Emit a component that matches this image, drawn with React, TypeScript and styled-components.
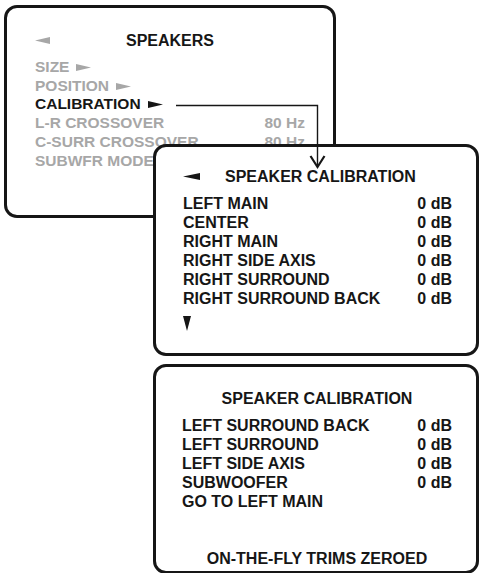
import React from 'react';
import styled, { createGlobalStyle } from 'styled-components';

const GlobalStyle = createGlobalStyle`
  html, body {
    margin: 0;
    padding: 0;
    background: #ffffff;
  }
  body {
    font-family: 'Liberation Sans', Arial, sans-serif;
  }
`;

const INK = '#161616';
const DIM = '#a7a7a7';

type Box = { $x: number; $y: number; $w: number; $h: number; $pad: string };

const Canvas = styled.div`
  position: relative;
  width: 480px;
  height: 573px;
  overflow: hidden;
  background: #ffffff;
`;

const Screen = styled.section<Box>`
  position: absolute;
  left: ${(p) => p.$x}px;
  top: ${(p) => p.$y}px;
  width: ${(p) => p.$w}px;
  height: ${(p) => p.$h}px;
  box-sizing: border-box;
  padding: ${(p) => p.$pad};
  border: 3px solid ${INK};
  border-radius: 13px;
  background: #ffffff;
  display: flex;
  flex-direction: column;
  font-weight: bold;
  color: ${INK};
`;

const TitleBar = styled.div`
  display: grid;
  grid-template-columns: 1fr auto 1fr;
  align-items: center;
  font-size: 16px;
  line-height: 19px;
  margin-bottom: 8px;
`;

const SubTitleBar = styled.div`
  display: flex;
  align-items: center;
  gap: 25px;
  font-size: 16px;
  line-height: 19px;
  margin-bottom: 8px;
`;

const CenterTitle = styled.div`
  text-align: center;
  font-size: 16px;
  line-height: 19px;
  margin-bottom: 8px;
`;

const MenuItem = styled.div<{ $dim?: boolean }>`
  display: flex;
  justify-content: space-between;
  align-items: center;
  font-size: 15.5px;
  line-height: 18.7px;
  color: ${(p) => (p.$dim ? DIM : INK)};
  white-space: nowrap;
`;

const Label = styled.span`
  display: inline-flex;
  align-items: center;
  gap: 7px;
`;

const TrimRow = styled.div`
  display: flex;
  justify-content: space-between;
  font-size: 16px;
  line-height: 19px;
  white-space: nowrap;
`;

const MoreDown = styled.div`
  margin-top: 8px;
  display: flex;
`;

const Footer = styled.div`
  margin-top: auto;
  text-align: center;
  font-size: 16px;
  line-height: 19px;
`;

const Connector = styled.svg`
  position: absolute;
  left: 0;
  top: 0;
  pointer-events: none;
`;

const Tri = ({ dir, color, w, h }: { dir: 'left' | 'right' | 'down'; color: string; w: number; h: number }) => {
  const pts =
    dir === 'left'
      ? `0,${h / 2} ${w},0 ${w},${h}`
      : dir === 'right'
      ? `0,0 ${w},${h / 2} 0,${h}`
      : `0,0 ${w},0 ${w / 2},${h}`;
  return (
    <svg width={w} height={h} viewBox={`0 0 ${w} ${h}`} style={{ display: 'block' }}>
      <polygon points={pts} fill={color} />
    </svg>
  );
};

const speakers = [
  { name: 'SIZE', more: true, dim: true },
  { name: 'POSITION', more: true, dim: true },
  { name: 'CALIBRATION', more: true, dim: false },
  { name: 'L-R CROSSOVER', value: '80 Hz', dim: true },
  { name: 'C-SURR CROSSOVER', value: '80 Hz', dim: true },
  { name: 'SUBWFR MODE', dim: true },
];

const firstPage = ['LEFT MAIN', 'CENTER', 'RIGHT MAIN', 'RIGHT SIDE AXIS', 'RIGHT SURROUND', 'RIGHT SURROUND BACK'];
const secondPage = ['LEFT SURROUND BACK', 'LEFT SURROUND', 'LEFT SIDE AXIS', 'SUBWOOFER'];

export default function App() {
  return (
    <>
      <GlobalStyle />
      <Canvas>
        <Screen $x={4} $y={5} $w={332} $h={213} $pad="23px 28px 0 28px">
          <TitleBar>
            <Tri dir="left" color={DIM} w={15} h={7} />
            <span>SPEAKERS</span>
            <span />
          </TitleBar>
          {speakers.map((s) => (
            <MenuItem key={s.name} $dim={s.dim}>
              <Label>
                {s.name}
                {s.more && <Tri dir="right" color={s.dim ? DIM : INK} w={15} h={7} />}
              </Label>
              {s.value && <span>{s.value}</span>}
            </MenuItem>
          ))}
        </Screen>

        <Screen $x={153} $y={144} $w={326} $h={212} $pad="20px 24px 0 27px">
          <SubTitleBar>
            <Tri dir="left" color={INK} w={17} h={7} />
            <span>SPEAKER CALIBRATION</span>
          </SubTitleBar>
          {firstPage.map((n) => (
            <TrimRow key={n}>
              <span>{n}</span>
              <span>0 dB</span>
            </TrimRow>
          ))}
          <MoreDown>
            <Tri dir="down" color={INK} w={8} h={15} />
          </MoreDown>
        </Screen>

        <Screen $x={153} $y={364} $w={326} $h={210} $pad="22px 24px 3px 26px">
          <CenterTitle>SPEAKER CALIBRATION</CenterTitle>
          {secondPage.map((n) => (
            <TrimRow key={n}>
              <span>{n}</span>
              <span>0 dB</span>
            </TrimRow>
          ))}
          <TrimRow>
            <span>GO TO LEFT MAIN</span>
          </TrimRow>
          <Footer>ON-THE-FLY TRIMS ZEROED</Footer>
        </Screen>

        <Connector width={480} height={573} viewBox="0 0 480 573">
          <path d="M176 105.5 H317.5 V166" fill="none" stroke={INK} strokeWidth={1.4} />
          <polyline points="310.5,156 317.5,167 324.5,156" fill="none" stroke={INK} strokeWidth={2.2} />
        </Connector>
      </Canvas>
    </>
  );
}
